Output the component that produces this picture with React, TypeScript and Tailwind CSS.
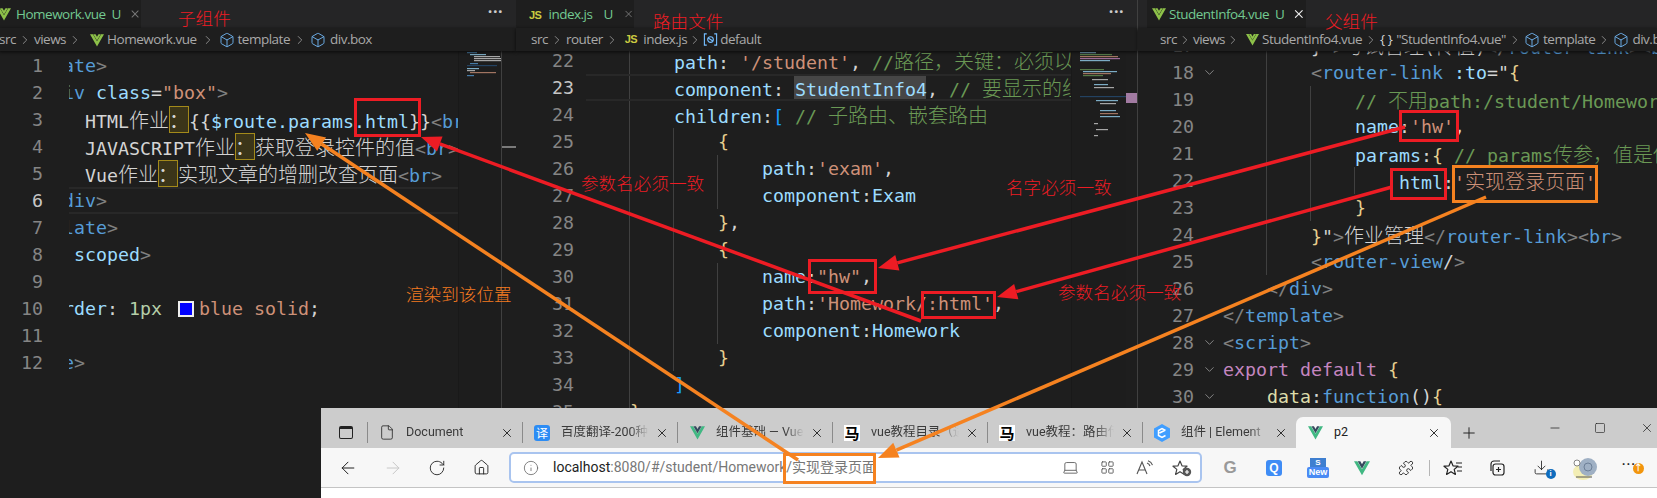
import React from "react";
import { ArrowLeft, ArrowRight, RotateCw, Home, Info, Plus, Minus, Square, X, File, Box, ChevronRight, ChevronDown, Puzzle, Download, LayoutGrid, Laptop } from "lucide-react";

const C: Record<string, string> = {
  p: "text-[#808080]", t: "text-[#569cd6]", a: "text-[#9cdcfe]", s: "text-[#ce9178]", x: "text-[#d4d4d4]",
  c: "text-[#6a9955]", k: "text-[#c586c0]", f: "text-[#dcdcaa]", b: "text-[#e6cf8f]", n: "text-[#b5cea8]", h: "text-[#179fff]",
};
type Tok = [string, string?];

function Txt({ text, cls }: { text: string; cls: string }) {
  const parts = text.split(/([\u2000-\u206f\u3000-\u9fff\uff00-\uffef]+)/);
  return (
    <span className={cls}>
      {parts.map((p, i) =>
        /[\u2000-\u206f\u3000-\u9fff\uff00-\uffef]/.test(p) ? (
          <span key={i} className="text-[20px] font-['Noto_Sans_CJK_SC','sans-serif'] font-light">{p}</span>
        ) : (
          <span key={i}>{p}</span>
        )
      )}
    </span>
  );
}

function CodeLine({ toks, active }: { toks: Tok[]; active?: boolean }) {
  return (
    <div className={`h-[27px] leading-[27px] whitespace-pre ${active ? "shadow-[inset_0_2px_0_#282828,inset_0_-2px_0_#282828]" : ""}`}>
      {toks.map((t, i) => {
        if (t[0] === "hl")
          return (
            <span key={i} className="inline-block w-[20px] h-[27px] align-top bg-[#3b3519] outline outline-1 -outline-offset-1 outline-[#a38a1a] text-[#d4d4d4] text-[20px] leading-[27px] font-['Noto_Sans_CJK_SC','sans-serif']">：</span>
          );
        if (t[0] === "sw")
          return <span key={i} className="inline-block w-[16px] h-[16px] mx-[5px] align-[-2px] bg-[#0000ff] border-2 border-[#eeeeee]" />;
        return <Txt key={i} text={t[1] ?? ""} cls={C[t[0]]} />;
      })}
    </div>
  );
}

const VueIcon = ({ s = 14, mono = true }: { s?: number; mono?: boolean }) => (
  <svg width={s} height={s} viewBox="0 0 24 24" className="shrink-0">
    <polygon points="0,2 12,23 24,2 19,2 12,14 5,2" fill={mono ? "#8dc149" : "#41b883"} />
    <polygon points="5.5,2 12,13 18.5,2 14.5,2 12,6.5 9.5,2" fill={mono ? "#8dc149" : "#35495e"} />
  </svg>
);
const JsIcon = () => <span className="text-[11px] font-bold text-[#cbcb41] font-['Liberation_Sans','sans-serif'] leading-none shrink-0">JS</span>;
const Cube = () => <Box size={16} strokeWidth={1.3} className="text-[#75beff] shrink-0" />;
const Chev = () => <ChevronRight size={14} strokeWidth={1.3} className="text-[#a8a8a8] shrink-0" />;
const VarIcon = () => (
  <svg width="15" height="15" viewBox="0 0 16 16" fill="none" stroke="#75beff" strokeWidth="1.2" className="shrink-0">
    <path d="M4 2H1.5v12H4M12 2h2.5v12H12" />
    <circle cx="8" cy="8" r="3" />
    <path d="M5.5 6.5 10.5 9.5" />
  </svg>
);

function TabBar({ children, tabW, dots, offset }: { children: React.ReactNode; tabW: string; dots?: boolean; offset: string }) {
  return (
    <div className="h-[28px] bg-[#252526] flex items-stretch shrink-0 font-['Open_Sans','Noto_Sans','sans-serif'] text-[13.5px] text-[#73c991] tracking-[-0.5px]">
      <div className={`${offset} ${tabW} bg-[#1e1e1e] flex items-center`}>{children}</div>
      {dots && <div className="ml-auto pr-[13px] text-[#cccccc] text-[16px] leading-[22px] font-bold tracking-[0.5px]">···</div>}
    </div>
  );
}

function Crumbs({ children, cls }: { children: React.ReactNode; cls: string }) {
  return (
    <div className={`h-[23px] shrink-0 bg-[#1e1e1e] flex items-center text-[#a9a9a9] text-[13.5px] tracking-[-0.5px] font-['Open_Sans','Noto_Sans','sans-serif'] whitespace-pre z-10 shadow-[0_1px_3px_#0a0a0a] ${cls}`}>
      {children}
    </div>
  );
}

function Gutter({ from, to, active, w, folds, foldW }: { from: number; to: number; active: number; w: string; folds?: number[]; foldW?: string }) {
  const rows: number[] = [];
  for (let i = from; i <= to; i++) rows.push(i);
  return (
    <div className={`${w} shrink-0 flex flex-col`}>
      {rows.map((n) => (
        <div key={n} className="h-[27px] shrink-0 flex items-center justify-end">
          <span className={n === active ? "text-[#c6c6c6]" : "text-[#858585]"}>{n}</span>
          {foldW && (
            <span className={`${foldW} flex justify-center`}>
              {folds?.includes(n) && <ChevronDown size={15} strokeWidth={1.5} className="text-[#8a8a8a]" />}
            </span>
          )}
        </div>
      ))}
    </div>
  );
}

const Guide = ({ cls }: { cls: string }) => <div className={`absolute w-px bg-[#404040] ${cls}`} />;

const MiniLines = ({ w, h, lines }: { w: number; h: number; lines: [number, number, number, string][] }) => (
  <svg width={w} height={h} className="block">
    {lines.map((l, i) => (
      <rect key={i} x={l[0]} y={l[1]} width={l[2]} height="1.2" fill={l[3]} opacity="0.75" />
    ))}
  </svg>
);

const p1: Tok[][] = [
  [["p", "<"], ["t", "template"], ["p", ">"]],
  [["x", "    "], ["p", "<"], ["t", "div"], ["x", " "], ["a", "class"], ["x", "="], ["s", "\"box\""], ["p", ">"]],
  [["x", "        HTML作业"], ["hl"], ["x", "{{"], ["a", "$route.params.html"], ["x", "}}"], ["p", "<"], ["t", "br"], ["p", ">"]],
  [["x", "        JAVASCRIPT作业"], ["hl"], ["x", "获取登录控件的值"], ["p", "<"], ["t", "br"], ["p", ">"]],
  [["x", "        Vue作业"], ["hl"], ["x", "实现文章的增删改查页面"], ["p", "<"], ["t", "br"], ["p", ">"]],
  [["x", "    "], ["p", "</"], ["t", "div"], ["p", ">"]],
  [["p", "</"], ["t", "template"], ["p", ">"]],
  [["p", "<"], ["t", "style"], ["x", " "], ["a", "scoped"], ["p", ">"]],
  [],
  [["x", "    "], ["a", "border"], ["x", ": "], ["n", "1px"], ["x", " "], ["sw"], ["s", "blue solid"], ["x", ";"]],
  [],
  [["p", "</"], ["t", "style"], ["p", ">"]],
];

const p2: Tok[][] = [
  [["x", "        "], ["a", "path"], ["x", ": "], ["s", "'/student'"], ["x", ", "], ["c", "//路径，关键：必须以/开头"]],
  [["x", "        "], ["a", "component"], ["x", ": "], ["a", "StudentInfo4"], ["x", ", "], ["c", "// 要显示的组件名称"]],
  [["x", "        "], ["a", "children"], ["x", ":"], ["h", "["], ["x", " "], ["c", "// 子路由、嵌套路由"]],
  [["b", "            {"]],
  [["x", "                "], ["a", "path"], ["x", ":"], ["s", "'exam'"], ["x", ","]],
  [["x", "                "], ["a", "component"], ["x", ":"], ["a", "Exam"]],
  [["b", "            }"], ["x", ","]],
  [["b", "            {"]],
  [["x", "                "], ["a", "name"], ["x", ":"], ["s", "\"hw\""], ["x", ","]],
  [["x", "                "], ["a", "path"], ["x", ":"], ["s", "'Homework/:html'"], ["x", ","]],
  [["x", "                "], ["a", "component"], ["x", ":"], ["a", "Homework"]],
  [["b", "            }"]],
  [["h", "        ]"]],
  [["b", "    }"]],
];

const p3: Tok[][] = [
  [["x", "        }\">考试管理(传值)"], ["p", "</"], ["t", "router-link"], ["p", ">"], ["p", "<"], ["t", "br"], ["p", ">"]],
  [["x", "        "], ["p", "<"], ["t", "router-link"], ["x", " "], ["a", ":to"], ["x", "=\""], ["b", "{"]],
  [["x", "            "], ["c", "// 不用path:/student/Homework/xx"]],
  [["x", "            "], ["a", "name"], ["x", ":"], ["s", "'hw'"], ["x", ","]],
  [["x", "            "], ["a", "params"], ["x", ":"], ["b", "{"], ["x", " "], ["c", "// params传参，值是传递的"]],
  [["x", "                "], ["a", "html"], ["x", ":"], ["s", "'实现登录页面'"]],
  [["b", "            }"]],
  [["x", "        "], ["b", "}"], ["x", "\""], ["p", ">"], ["x", "作业管理"], ["p", "</"], ["t", "router-link"], ["p", ">"], ["p", "<"], ["t", "br"], ["p", ">"]],
  [["x", "        "], ["p", "<"], ["t", "router-view"], ["x", "/"], ["p", ">"]],
  [["x", "    "], ["p", "</"], ["t", "div"], ["p", ">"]],
  [["p", "</"], ["t", "template"], ["p", ">"]],
  [["p", "<"], ["t", "script"], ["p", ">"]],
  [["k", "export"], ["x", " "], ["k", "default"], ["x", " "], ["b", "{"]],
  [["x", "    "], ["f", "data"], ["x", ":"], ["t", "function"], ["x", "()"], ["b", "{"]],
];

const mono = "font-['DejaVu_Sans_Mono','monospace'] text-[18.27px]";

function Editor1() {
  return (
    <div className="w-[516px] shrink-0 flex flex-col">
      <TabBar tabW="w-[141px]" offset="" dots>
        <span className="-ml-[3px] mr-[5px]"><VueIcon s={14} /></span>
        <span>Homework.vue</span>
        <span className="ml-[6px]">U</span>
        <X size={14} className="ml-[8px] text-[#777]" />
      </TabBar>
      <Crumbs cls="-ml-[1px]">
        <span>src</span><span className="mx-[2px]"><Chev /></span><span>views</span><span className="mx-[2px] mr-[8px]"><Chev /></span>
        <VueIcon s={14} /><span className="ml-[3px]">Homework.vue</span><span className="mx-[4px]"><Chev /></span>
        <Cube /><span className="ml-[3px]">template</span><span className="mx-[3px]"><Chev /></span><Cube /><span className="ml-[4px]">div.box</span>
      </Crumbs>
      <div className={`flex-1 flex min-h-0 overflow-hidden bg-[#1e1e1e] ${mono}`}>
        <div className="pt-[1px]"><Gutter from={1} to={12} active={6} w="w-[43px]" /></div>
        <div className="ml-[26px] w-[389px] overflow-hidden pt-[1px] shrink-0">
          <div className="-ml-[72px]">
            {p1.map((t, i) => <CodeLine key={i} toks={t} active={i === 5} />)}
          </div>
        </div>
        <div className="w-[43px] shrink-0 border-l border-[#191919] bg-[#1d1d1d] pl-[8px]">
          <MiniLines w={34} h={26} lines={[[0,1,10,"#569cd6"],[3,3,16,"#9cdcfe"],[7,5,26,"#d4d4d4"],[7,7,27,"#d4d4d4"],[7,9,27,"#d4d4d4"],[3,12,8,"#569cd6"],[0,14,30,"#264f78"],[0,17,12,"#9cdcfe"],[0,19,8,"#d4d4d4"],[3,21,26,"#ce9178"],[0,24,7,"#569cd6"]]} />
        </div>
        <div className="w-[15px] shrink-0 border-l border-[#404040] pt-[95px]">
          <div className="h-[2px] bg-[#7a7a7a]" />
        </div>
      </div>
    </div>
  );
}

function Editor2() {
  return (
    <div className="w-[621px] shrink-0 flex flex-col">
      <TabBar tabW="w-[118px]" offset="" dots>
        <span className="ml-[13px] mr-[7px]"><JsIcon /></span>
        <span>index.js</span>
        <span className="ml-[11px]">U</span>
        <X size={14} className="ml-[10px] text-[#777]" />
      </TabBar>
      <Crumbs cls="pl-[15px]">
        <span>src</span><span className="mx-[2px]"><Chev /></span><span>router</span><span className="mx-[2px] mr-[6px]"><Chev /></span>
        <JsIcon /><span className="ml-[6px]">index.js</span><span className="mx-[1px]"><Chev /></span><VarIcon /><span className="ml-[2px]">default</span>
      </Crumbs>
      <div className={`flex-1 flex min-h-0 overflow-hidden bg-[#1e1e1e] ${mono}`}>
        <div className="-mt-[4px]"><Gutter from={22} to={36} active={23} w="w-[58px]" /></div>
        <div className="relative w-[485px] ml-[12px] shrink-0 overflow-hidden -mt-[4px]">
          <Guide cls="left-[43px] top-0 h-[380px]" />
          <Guide cls="left-[87px] top-[81px] h-[243px]" />
          <Guide cls="left-[131px] top-[108px] h-[54px]" />
          <Guide cls="left-[131px] top-[216px] h-[81px]" />
          {p2.map((t, i) => (
            <div key={i} className={i === 1 ? "relative" : ""}>
              {i === 1 && <div className="absolute left-[208px] top-0 w-[132px] h-[27px] bg-[#464646]" />}
              <div className="relative"><CodeLine toks={t} active={i === 1} /></div>
            </div>
          ))}
        </div>
        <div className="w-[55px] shrink-0 bg-[#1d1d1d] border-l border-[#191919] pl-[8px]">
          <MiniLines w={47} h={120} lines={[[0,1,16,"#9cdcfe"],[0,3,32,"#6a9955"],[0,5,38,"#ce9178"],[0,7,40,"#c586c0"],[0,9,30,"#9cdcfe"],[0,18,24,"#6a9955"],[3,20,34,"#9cdcfe"],[3,22,28,"#ce9178"],[3,24,20,"#6a9955"],[12,28,16,"#d4d4d4"],[14,33,14,"#9cdcfe"],[14,36,20,"#d4d4d4"],[0,45,47,"#264f78"],[16,49,22,"#9cdcfe"],[20,52,16,"#d4d4d4"],[20,59,16,"#9cdcfe"],[20,62,18,"#ce9178"],[20,65,20,"#9cdcfe"],[14,72,4,"#d4d4d4"],[16,78,12,"#d4d4d4"],[14,84,4,"#d4d4d4"]]} />
        </div>
        <div className="w-[11px] shrink-0 pt-[42px]">
          <div className="h-[10px] bg-[#a27ba2]" />
        </div>
      </div>
    </div>
  );
}

function Editor3() {
  return (
    <div className="flex-1 flex flex-col border-l border-[#404040] min-w-0">
      <TabBar tabW="w-[159px]" offset="ml-[9px]">
        <span className="ml-[5px] mr-[3px]"><VueIcon s={14} /></span>
        <span>StudentInfo4.vue</span>
        <span className="ml-[6px]">U</span>
        <X size={14} className="ml-[8px] text-[#eeeeee]" />
      </TabBar>
      <Crumbs cls="pl-[22px]">
        <span>src</span><span className="mx-[1px]"><Chev /></span><span>views</span><span className="mx-[1px] mr-[6px]"><Chev /></span>
        <VueIcon s={13} /><span className="ml-[3px]">StudentInfo4.vue</span><span className="mx-[2px]"><Chev /></span>
        <span className="text-[#d4d4d4]">{"{ }"}</span><span className="ml-[4px]">"StudentInfo4.vue"</span><span className="mx-[2px]"><Chev /></span>
        <Cube /><span className="ml-[3px]">template</span><span className="mx-[2px]"><Chev /></span><Cube /><span className="ml-[3px]">div.box</span>
      </Crumbs>
      <div className={`flex-1 flex min-h-0 overflow-hidden bg-[#1e1e1e] ${mono}`}>
        <div className="-mt-[19px]"><Gutter from={17} to={31} active={0} w="w-[85px]" folds={[18, 28, 29, 30]} foldW="w-[27px] ml-[2px]" /></div>
        <div className="relative flex-1 -mt-[19px] overflow-hidden">
          <Guide cls="left-[-1px] top-0 h-[270px]" />
          <Guide cls="left-[43px] top-0 h-[243px]" />
          <Guide cls="left-[87px] top-[54px] h-[135px]" />
          <Guide cls="left-[131px] top-[135px] h-[27px]" />
          {p3.map((t, i) => <CodeLine key={i} toks={t} />)}
        </div>
      </div>
    </div>
  );
}

const Sep = () => <div className="w-px h-[21px] bg-[#8a8a8a] shrink-0" />;
const Ma = () => (
  <span className="w-[16px] h-[16px] bg-white text-black text-[15px] leading-[16px] font-bold text-center font-['Noto_Sans_CJK_SC','sans-serif'] shrink-0">马</span>
);
const EleIcon = () => (
  <svg width="16" height="18" viewBox="0 0 16 18" className="shrink-0">
    <polygon points="8,0 16,4.5 16,13.5 8,18 0,13.5 0,4.5" fill="#409eff" />
    <path d="M11.5 6.5 8 4.5 4.5 6.5v5L8 13.5l3.5-2M5.5 9l5-2.5" fill="none" stroke="#fff" strokeWidth="1.5" />
  </svg>
);
const Trans = () => (
  <span className="w-[16px] h-[16px] rounded-[3px] bg-[#2c8cf4] text-white text-[12px] leading-[16px] text-center font-['Noto_Sans_CJK_SC','sans-serif'] shrink-0">译</span>
);

function BTab({ icon, title, w, last }: { icon: React.ReactNode; title: string; w: string; last?: boolean }) {
  return (
    <div className={`${w} h-[31px] shrink-0 flex items-center relative`}>
      <div className="ml-[11px] w-4 flex justify-center shrink-0">{icon}</div>
      <div className="ml-[11px] flex-1 min-w-0 overflow-hidden whitespace-nowrap [mask-image:linear-gradient(to_right,black_78%,transparent)] text-[#3a3a3a]">{title}</div>
      <X size={14} strokeWidth={1.6} className="mr-[8px] ml-[6px] text-[#222] shrink-0" />
      {!last && <Sep />}
    </div>
  );
}

const Slot = ({ children, w = "w-11" }: { children: React.ReactNode; w?: string }) => (
  <div className={`${w} shrink-0 flex items-center justify-center`}>{children}</div>
);

const FavStar = ({ plus }: { plus?: boolean }) => (
  <svg width="20" height="18" viewBox="0 0 20 18" fill="none" stroke={plus ? "#444" : "#222"} strokeWidth="1.2" strokeLinejoin="round">
    <path d="M8 2 10 6.8l5 .4-3.8 3.2 1.2 5L8 12.7l-4.4 2.7 1.2-5L1 7.2l5-.4z" />
    {plus ? (
      <>
        <circle cx="15" cy="13" r="4.2" fill="#555" stroke="none" />
        <path d="M15 11v4M13 13h4" stroke="#fff" />
      </>
    ) : (
      <path d="M13 4h6M15 8h4M14 12h5" />
    )}
  </svg>
);

function Browser() {
  return (
    <div className="absolute left-[321px] right-0 top-[408px] bottom-0 z-10 bg-white flex flex-col font-['Roboto','Noto_Sans_CJK_SC','sans-serif'] text-[12.5px]">
      <div className="h-[40px] bg-[#cccccc] flex items-end shrink-0">
        <div className="w-[47px] h-[31px] flex items-center shrink-0">
          <div className="ml-[18px] w-[14px] h-[13px] border-[1.5px] border-[#222] rounded-[2px] border-t-[3px]" />
          <div className="ml-auto"><Sep /></div>
        </div>
        <BTab w="w-[155px]" icon={<File size={17} strokeWidth={1.2} className="text-[#222]" />} title="Document" />
        <BTab w="w-[155px]" icon={<Trans />} title="百度翻译-200种语言互译" />
        <BTab w="w-[155px]" icon={<VueIcon s={15} mono={false} />} title="组件基础 — Vue.js" />
        <BTab w="w-[155px]" icon={<Ma />} title="vue教程目录（适合初学者）" />
        <BTab w="w-[155px]" icon={<Ma />} title="vue教程：路由传参" />
        <BTab w="w-[153px]" icon={<EleIcon />} title="组件 | Element" last />
        <div className="w-[155px] h-[31px] shrink-0 rounded-t-[7px] bg-[#f7f7f7] flex items-center">
          <div className="ml-[11px] w-4 flex justify-center"><VueIcon s={15} mono={false} /></div>
          <span className="ml-[11px] flex-1 text-[#222]">p2</span>
          <X size={14} strokeWidth={1.6} className="mr-[10px] text-[#222]" />
        </div>
        <div className="w-[36px] h-[31px] flex items-center justify-center shrink-0"><Plus size={18} strokeWidth={1.3} className="text-[#222]" /></div>
        <div className="flex-1 self-start pt-[13px] flex items-center text-[#222]">
          <div className="ml-[61px] w-[46px]"><Minus size={14} strokeWidth={1.3} /></div>
          <div className="w-[46px]"><Square size={12} strokeWidth={1.3} /></div>
          <div><X size={14} strokeWidth={1.3} /></div>
        </div>
      </div>
      <div className="h-[40px] bg-[#f7f7f7] border-b border-[#c4c4c4] flex items-center pl-[5px] shrink-0 text-[#222]">
        <Slot w="w-[44.5px]"><ArrowLeft size={20} strokeWidth={1.2} /></Slot>
        <Slot w="w-[44.5px]"><ArrowRight size={20} strokeWidth={1.2} className="text-[#c8c8c8]" /></Slot>
        <Slot w="w-[44.5px]"><RotateCw size={18} strokeWidth={1.2} /></Slot>
        <Slot w="w-[44.5px]"><Home size={17} strokeWidth={1.3} /></Slot>
        <div className="ml-[5px] w-[693px] h-[31px] shrink-0 bg-white rounded-[5px] border-2 border-[#a9c4ef] flex items-center">
          <Info size={16} strokeWidth={1.2} className="ml-[12px] text-[#666]" />
          <span className="ml-[14px] text-[14px] whitespace-pre text-[#777] flex-1">
            <span className="text-[#222]">localhost</span>:8080/#/student/Homework/实现登录页面
          </span>
          <Slot w="w-[37px]"><Laptop size={17} strokeWidth={1.2} className="text-[#555]" /></Slot>
          <Slot w="w-[37px]"><LayoutGrid size={15} strokeWidth={1.4} className="text-[#555]" /></Slot>
          <Slot w="w-[37px]">
            <svg width="18" height="16" viewBox="0 0 18 16" fill="none" stroke="#555" strokeWidth="1.1"><path d="M1 14 6 2l5 12M3 10h6M11 3c1.5.5 2.5 1.5 3 3M12 .8c2.2.7 3.8 2.3 4.5 4.4" /></svg>
          </Slot>
          <Slot w="w-[37px]"><FavStar plus /></Slot>
        </div>
        <div className="ml-[6px] flex items-center">
          <Slot><span className="text-[#999] font-bold text-[17px] font-['Liberation_Sans','sans-serif']">G</span></Slot>
          <Slot><span className="w-[16px] h-[16px] rounded-[3px] bg-[#3f8cf5] text-white text-[12px] leading-[16px] font-bold text-center font-['Liberation_Sans','sans-serif']">Q</span></Slot>
          <Slot>
            <span className="flex flex-col items-center">
              <span className="w-[16px] h-[9px] bg-[#3f7fd0] text-white text-[8px] leading-[9px] text-center font-bold font-['Liberation_Sans','sans-serif']">S</span>
              <span className="px-[2px] h-[11px] rounded-[2px] bg-[#4a8af4] text-white text-[9px] leading-[11px] font-['Liberation_Sans','sans-serif'] font-bold">New</span>
            </span>
          </Slot>
          <Slot><VueIcon s={16} mono={false} /></Slot>
          <Slot><Puzzle size={16} strokeWidth={1.3} /></Slot>
          <div className="w-px h-[16px] bg-[#b5b5b5] mx-[1px]" />
          <Slot><FavStar /></Slot>
          <Slot>
            <svg width="18" height="18" viewBox="0 0 18 18" fill="none" stroke="#222" strokeWidth="1.2"><rect x="5" y="5" width="11" height="11" rx="2.5" /><path d="M10.5 8v5M8 10.5h5M3 12V5a3 3 0 0 1 3-3h6" /></svg>
          </Slot>
          <Slot>
            <span className="relative"><Download size={17} strokeWidth={1.2} /><span className="absolute -right-[6px] -bottom-[3px] w-[10px] h-[10px] rounded-full bg-[#0f6cbd] text-white text-[8px] leading-[10px] text-center font-bold">i</span></span>
          </Slot>
          <Slot>
            <svg width="26" height="26" viewBox="0 0 26 26">
              <ellipse cx="11" cy="17" rx="10" ry="8" fill="#f3eeb4" />
              <circle cx="16" cy="12" r="9" fill="#9fb0c4" />
              <circle cx="16" cy="12" r="4" fill="none" stroke="#6d8098" />
              <circle cx="5" cy="8" r="3" fill="#fff" stroke="#555" strokeWidth=".7" />
              <path d="M4 22h16" stroke="#555" />
            </svg>
          </Slot>
          <Slot>
            <span className="relative text-[#222] font-bold leading-none tracking-[1px] -mt-[5px]">···<span className="absolute left-[11px] top-[4px] w-[11px] h-[11px] rounded-full bg-[#f2950d] text-white text-[9px] leading-[11px] text-center tracking-normal">↑</span></span>
          </Slot>
        </div>
      </div>
      <div className="flex-1 bg-white" />
    </div>
  );
}

const RED = "#ed1c24";
const ORG = "#f58220";

function Arrow({ x1, y1, x2, y2, color }: { x1: number; y1: number; x2: number; y2: number; color: string }) {
  const a = Math.atan2(y2 - y1, x2 - x1);
  const len = 20, hw = 8;
  const bx = x2 - len * Math.cos(a), by = y2 - len * Math.sin(a);
  const nx = -Math.sin(a) * hw, ny = Math.cos(a) * hw;
  return (
    <g>
      <line x1={x1} y1={y1} x2={bx} y2={by} stroke={color} strokeWidth="3.5" />
      <polygon points={`${x2},${y2} ${bx + nx},${by + ny} ${bx - nx},${by - ny}`} fill={color} />
    </g>
  );
}

const BoxR = ({ x, y, x2, y2, color }: { x: number; y: number; x2: number; y2: number; color: string }) => (
  <rect x={x + 1.5} y={y + 1.5} width={x2 - x - 3} height={y2 - y - 3} fill="none" stroke={color} strokeWidth="3" />
);

function Notes() {
  return (
    <svg width="1657" height="498" className="absolute left-0 top-0 z-20 pointer-events-none">
      <BoxR x={354} y={98} x2={421} y2={137} color={RED} />
      <BoxR x={808} y={259} x2={877} y2={294} color={RED} />
      <BoxR x={921} y={291} x2={996} y2={319} color={RED} />
      <BoxR x={1399} y={110} x2={1459} y2={142} color={RED} />
      <BoxR x={1390} y={168} x2={1447} y2={200} color={RED} />
      <BoxR x={1452} y={165} x2={1598} y2={203} color={ORG} />
      <BoxR x={783} y={453} x2={876} y2={484} color={ORG} />
      <Arrow x1={921} y1={321} x2={421} y2={137} color={RED} />
      <Arrow x1={1405} y1={127} x2={878} y2={268} color={RED} />
      <Arrow x1={1392} y1={187} x2={997} y2={297} color={RED} />
      <Arrow x1={798} y1={460} x2={305} y2={133} color={ORG} />
      <Arrow x1={1486} y1={197} x2={878} y2={458} color={ORG} />
    </svg>
  );
}

const Label = ({ cls, children }: { cls: string; children: React.ReactNode }) => (
  <div className={`absolute z-20 text-[17.6px] leading-[24px] whitespace-nowrap font-light font-['Noto_Sans_CJK_SC','sans-serif'] ${cls}`}>{children}</div>
);

export default function App() {
  return (
    <div className="relative w-[1657px] h-[498px] overflow-hidden bg-[#1e1e1e] flex">
      <Editor1 />
      <Editor2 />
      <Editor3 />
      <Browser />
      <Notes />
      <Label cls="left-[178px] top-[6px] text-[#ed1c24]">子组件</Label>
      <Label cls="left-[653px] top-[9px] text-[#ed1c24]">路由文件</Label>
      <Label cls="left-[1325px] top-[9px] text-[#ed1c24]">父组件</Label>
      <Label cls="left-[581px] top-[171px] text-[#ed1c24]">参数名必须一致</Label>
      <Label cls="left-[1006px] top-[175px] text-[#ed1c24]">名字必须一致</Label>
      <Label cls="left-[1058px] top-[280px] text-[#ed1c24]">参数名必须一致</Label>
      <Label cls="left-[406px] top-[282px] text-[#f47b20]">渲染到该位置</Label>
    </div>
  );
}
